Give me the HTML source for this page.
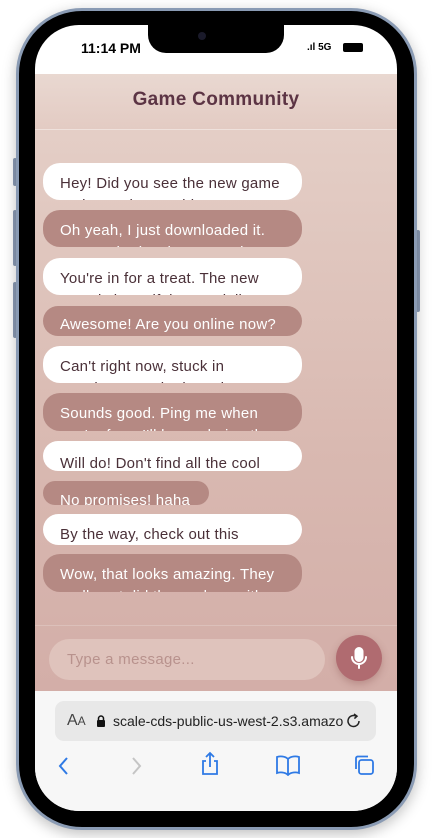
<!DOCTYPE html>
<html><head><style>
*{margin:0;padding:0;box-sizing:border-box}
body{width:433px;height:838px;background:#fff;position:relative;overflow:hidden;font-family:"Liberation Sans",sans-serif}
.frame{position:absolute;left:16px;top:8px;width:401px;height:822px;border-radius:66px;background:#000;border:3px solid #8a9bb4;box-shadow:0 4px 14px rgba(0,0,0,.25)}
.btn{position:absolute;width:4px;background:#8a9bb4;border-radius:2px}
.screen{position:absolute;left:35px;top:25px;width:362px;height:786px;border-radius:44px;overflow:hidden;background:#fff}
.notch{position:absolute;left:113px;top:0;width:136px;height:28px;background:#000;border-radius:0 0 18px 18px}
.time{position:absolute;left:46px;top:15px;font-weight:bold;font-size:14px;color:#000}
.app{position:absolute;left:0;top:49px;width:362px;height:617px;background:linear-gradient(180deg,#e6d2ca,#d9b9b1 60%,#d3aea8)}
.hdr{height:56px;border-bottom:1px solid #efe1dc;text-align:center;line-height:52px;font-size:19px;font-weight:bold;color:#5c3444;background:linear-gradient(#e9d8d1,#e3cbc3);letter-spacing:.3px}
.b{position:absolute;left:8px;width:259px;border-radius:17px;overflow:hidden;font-size:15px;letter-spacing:.25px;line-height:22px;padding:10px 17px 0;height:37px}
.w{background:#fff;color:#4a3038}
.d{background:#b58983;color:#fff}
.inp{position:absolute;left:14px;top:565px;width:276px;height:41px;border-radius:21px;background:#dfc3bc;color:#b8928d;font-size:15px;letter-spacing:.3px;line-height:41px;padding-left:18px}
.mic{position:absolute;left:301px;top:561px;width:46px;height:46px;border-radius:50%;background:#b06b70;box-shadow:0 3px 8px rgba(120,60,60,.3)}
.saf{position:absolute;left:0;top:666px;width:362px;height:120px;background:#f7f7f7}
.url{position:absolute;left:20px;top:10px;width:321px;height:40px;border-radius:9px;background:#e8e8e8;font-size:14px;color:#222;line-height:40px}
.home{position:absolute;left:113px;top:132px;width:136px;height:5px;border-radius:3px;background:#000}
</style></head><body>
<div class="btn" style="left:13px;top:158px;height:28px"></div>
<div class="btn" style="left:13px;top:210px;height:56px"></div>
<div class="btn" style="left:13px;top:282px;height:56px"></div>
<div class="btn" style="left:416px;top:230px;height:82px"></div>
<div class="frame"></div>
<div class="screen">
 <div class="notch"><div style="position:absolute;left:50px;top:7px;width:8px;height:8px;border-radius:50%;background:#1a1a2a"></div></div>
 <div class="time">11:14 PM</div>
 <div style="position:absolute;left:272px;top:17px;font-size:10px;font-weight:bold">.ıl 5G</div>
 <div style="position:absolute;left:308px;top:18px;width:20px;height:9px;background:#000;border-radius:2px"></div>
 <div class="app">
  <div class="hdr">Game Community</div>
  <div class="b w" style="top:89px">Hey! Did you see the new game update? The graphics are</div>
  <div class="b d" style="top:136px">Oh yeah, I just downloaded it. Haven't had a chance to play</div>
  <div class="b w" style="top:184px">You're in for a treat. The new zone is beautiful, especially at</div>
  <div class="b d" style="top:232px;height:30px;padding-top:8px">Awesome! Are you online now?</div>
  <div class="b w" style="top:272px">Can't right now, stuck in meetings. Maybe in an hour or</div>
  <div class="b d" style="top:319px;height:38px">Sounds good. Ping me when you're free. I'll be exploring the</div>
  <div class="b w" style="top:367px;height:30px;padding-top:12px">Will do! Don't find all the cool</div>
  <div class="b d" style="top:407px;width:166px;height:24px;padding-top:9px">No promises! haha</div>
  <div class="b w" style="top:440px;height:31px;padding-top:10px">By the way, check out this</div>
  <div class="b d" style="top:480px;height:38px">Wow, that looks amazing. They really out did themselves with</div>
  <div style="position:absolute;left:0;top:551px;width:362px;border-top:1px solid #dcc0ba"></div>
  <div class="inp">Type a message...</div>
  <div class="mic"><svg width="46" height="46" viewBox="0 0 46 46" fill="none" stroke="#fff" stroke-width="2" stroke-linecap="round"><rect x="19.5" y="13" width="7" height="13" rx="3.5" fill="#fff"/><path d="M16 22a7 7 0 0 0 14 0M23 29v4"/></svg></div>
 </div>
 <div class="saf">
  <div class="url"><span style="position:absolute;left:12px;font-size:16px;color:#444">A<span style="font-size:12px">A</span></span>
   <svg style="position:absolute;left:41px;top:14px" width="10" height="12" viewBox="0 0 10 12"><path d="M2.5 5V3.5a2.5 2.5 0 0 1 5 0V5" stroke="#111" stroke-width="1.5" fill="none"/><rect x="1" y="5" width="8" height="7" rx="1" fill="#111"/></svg>
   <span style="position:absolute;left:58px">scale-cds-public-us-west-2.s3.amazo</span>
   <svg style="position:absolute;left:290px;top:11px" width="18" height="18" viewBox="0 0 18 18" fill="none" stroke="#222" stroke-width="1.5"><path d="M14 9a5.5 5.5 0 1 1-3-4.9"/><path d="M9 2l3 2.2-2.6 2.4"/></svg>
  </div>
  <svg style="position:absolute;left:22px;top:64px" width="14" height="22" viewBox="0 0 14 22" fill="none" stroke="#2f7ae5" stroke-width="2"><path d="M10 3L3 11l7 8"/></svg>
  <svg style="position:absolute;left:94px;top:64px" width="14" height="22" viewBox="0 0 14 22" fill="none" stroke="#c5c5c5" stroke-width="2"><path d="M4 3l7 8-7 8"/></svg>
  <svg style="position:absolute;left:164px;top:60px" width="22" height="26" viewBox="0 0 22 26" fill="none" stroke="#2f7ae5" stroke-width="1.8"><path d="M7 10H4v13h14V10h-3M11 16V2M7 6l4-4 4 4"/></svg>
  <svg style="position:absolute;left:240px;top:63px" width="26" height="22" viewBox="0 0 26 22" fill="none" stroke="#2f7ae5" stroke-width="1.8"><path d="M13 5C10 2 5 2 2 3v16c3-1 8-1 11 2 3-3 8-3 11-2V3c-3-1-8-1-11 2zM13 5v16"/></svg>
  <svg style="position:absolute;left:318px;top:63px" width="22" height="22" viewBox="0 0 22 22" fill="none" stroke="#2f7ae5" stroke-width="1.8"><rect x="6" y="6" width="14" height="14" rx="2.5"/><path d="M3 15V4.5A2 2 0 0 1 4.5 2.5H15"/></svg>
  <div class="home"></div>
 </div>
</div>
</body></html>
